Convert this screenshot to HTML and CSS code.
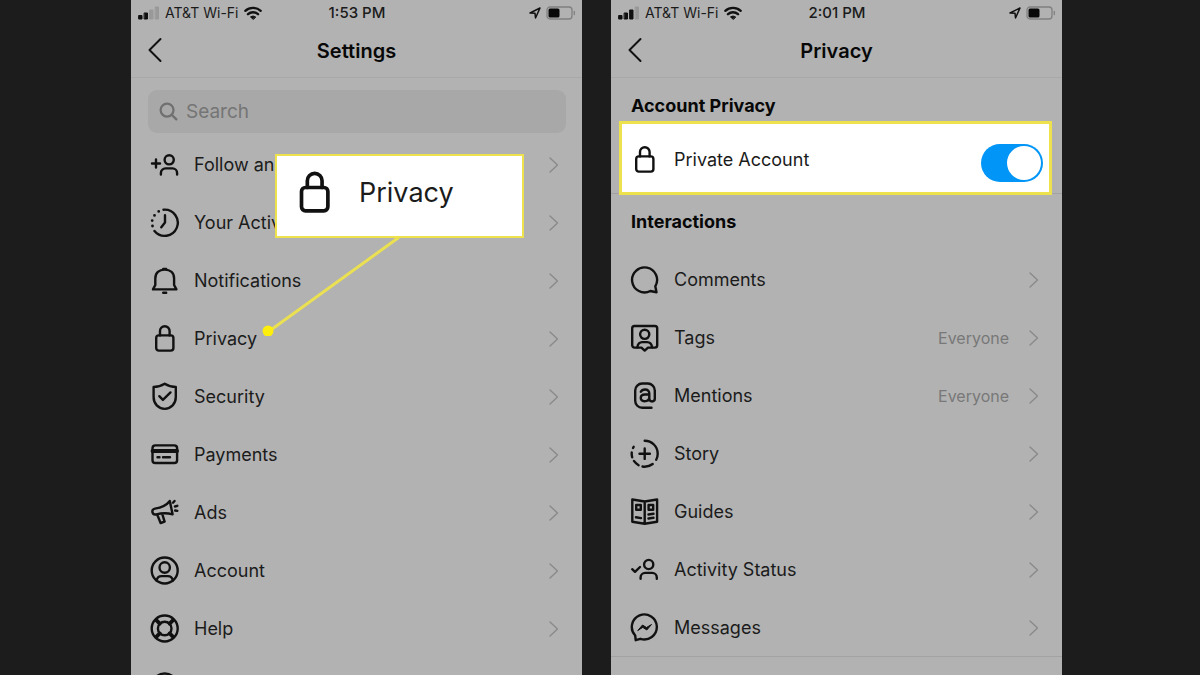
FILE: index.html
```
<!DOCTYPE html>
<html lang="en">
<head>
    <meta charset="UTF-8">
    <meta name="viewport" content="width=device-width, initial-scale=1.0">
    <title>Settings and Privacy</title>
    <link rel="stylesheet" href="styles.css">
</head>
<body>
    <!-- Shared icons -->
    <svg class="defs" aria-hidden="true">
        <symbol id="lock" viewBox="0 0 30 30">
            <rect x="6.2" y="11.4" width="17.2" height="15.2" rx="2.6"/>
            <path d="M10 11.4V7a4.8 4.8 0 0 1 9.6 0v4.4"/>
        </symbol>
        <symbol id="chevron" viewBox="0 0 10 16">
            <path d="M1 1l7.500 7L1 15"/>
        </symbol>
        <symbol id="back-arrow" viewBox="0 0 16 26">
            <path d="M13.500 2L2.500 13l11 11"/>
        </symbol>
        <symbol id="wifi" viewBox="0 0 18 14">
            <path d="M1.300 4.800a11.500 11.500 0 0 1 15.400 0M4 8.200a7.400 7.400 0 0 1 10 0"/>
            <path class="solid" d="M9 13.200L6.500 10.900a4 4 0 0 1 5 0z"/>
        </symbol>
        <symbol id="location" viewBox="0 0 12 12">
            <path d="M1 6L11 1 6.500 11 6 6.200z"/>
        </symbol>
        <symbol id="battery" viewBox="0 0 30 14">
            <rect class="case" x="1" y="1" width="25" height="12" rx="3"/>
            <path class="case" d="M28.300 5.500v3"/>
            <rect class="charge" x="2.500" y="2.500" width="11" height="9" rx="1.500"/>
        </symbol>
    </svg>

    <main class="screens">
        <section class="phone">
            <div class="status-bar">
                <div class="carrier">
                    <svg class="signal" viewBox="0 0 22 14"><path d="M1 9.500h3v3.500H1zM6.500 7h3v6h-3z"/><path class="off" d="M12 4h3v9h-3zM17.500 1h3v12h-3z"/></svg>
                    <span>AT&amp;T Wi-Fi</span>
                    <svg class="wifi"><use href="#wifi"/></svg>
                </div>
                <span class="time">1:53 PM</span>
                <div class="power">
                    <svg class="location"><use href="#location"/></svg>
                    <svg class="battery"><use href="#battery"/></svg>
                </div>
            </div>
            <header class="header">
                <button class="back" type="button" aria-label="Back"><svg><use href="#back-arrow"/></svg></button>
                <h1>Settings</h1>
            </header>

            <label class="search">
                <svg viewBox="0 0 20 20"><circle cx="8.500" cy="8.500" r="6.800"/><path d="M13.500 13.500l4.800 4.800"/></svg>
                <input type="text" placeholder="Search" aria-label="Search">
            </label>

            <nav class="list">
                <a class="row" href="#">
                    <svg class="icon" viewBox="0 0 30 30"><path d="M2 13.500h8M6 9.500v8"/><circle cx="19.200" cy="9.800" r="4.600"/><path d="M10.900 24.500V23a4.600 4.600 0 0 1 4.600-4.600h7a4.600 4.600 0 0 1 4.600 4.600v1.500"/></svg>
                    <span>Follow and Invite Friends</span>
                    <svg class="chevron"><use href="#chevron"/></svg>
                </a>
                <a class="row" href="#">
                    <svg class="icon" viewBox="0 0 30 30"><path d="M13.500 1.700A13.100 13.100 0 1 1 4.500 23M15 7.200v7.300l-3.700 4.700"/><path class="dots" d="M8.700 3.400h0M4.500 7.400h0M2.200 12.600h0M2.500 18h0"/></svg>
                    <span>Your Activity</span>
                    <svg class="chevron"><use href="#chevron"/></svg>
                </a>
                <a class="row" href="#">
                    <svg class="icon" viewBox="0 0 30 30"><path d="M3 23.400L5.300 19v-6.500c0-5.600 3.700-8.900 9.400-8.900s9.400 3.300 9.400 8.900V19l2.300 4.400zM13.200 2.900h3M13.200 26.800h3"/></svg>
                    <span>Notifications</span>
                    <svg class="chevron"><use href="#chevron"/></svg>
                </a>
                <a class="row" href="#">
                    <svg class="icon"><use href="#lock"/></svg>
                    <span>Privacy</span>
                    <svg class="chevron"><use href="#chevron"/></svg>
                </a>
                <a class="row" href="#">
                    <svg class="icon" viewBox="0 0 30 30"><path d="M14.700 1.700c3.300 2.100 6.800 3.200 11.100 3.200V15c0 6.800-4.700 11.600-11.100 11.900C8.300 26.600 3.600 21.800 3.600 15V4.900c4.300 0 7.800-1.100 11.100-3.200zM9.300 14.200l3.600 3.700 7.600-7.500"/></svg>
                    <span>Security</span>
                    <svg class="chevron"><use href="#chevron"/></svg>
                </a>
                <a class="row" href="#">
                    <svg class="icon" viewBox="0 0 30 30"><rect x="2.500" y="5.400" width="24.600" height="17.600" rx="2.800"/><path class="thick" d="M2.500 11h24.600"/><path d="M7.500 17.300h2M13 17.300h7"/></svg>
                    <span>Payments</span>
                    <svg class="chevron"><use href="#chevron"/></svg>
                </a>
                <a class="row" href="#">
                    <svg class="icon" viewBox="0 0 30 30"><path d="M19.800 3C16 8 11 9.700 5 10.600c-2.200.5-3 2-2.500 3.700s1.800 2.500 3.700 2c5.500-1.300 11-1.500 16.400 0zM7.300 16.800l3.300 8.200 4-1.300-2.300-7.500M23 4.700l1.500-1.700M25 8.500l2.300-.7M25.200 12.500l2.100.4"/></svg>
                    <span>Ads</span>
                    <svg class="chevron"><use href="#chevron"/></svg>
                </a>
                <a class="row" href="#">
                    <svg class="icon" viewBox="0 0 30 30"><circle cx="14.700" cy="14.500" r="13"/><circle cx="14.700" cy="11.500" r="5.200"/><path d="M6.500 24.500c.7-3 2.500-4.400 5-4.400h6.400c2.500 0 4.300 1.400 5 4.400"/></svg>
                    <span>Account</span>
                    <svg class="chevron"><use href="#chevron"/></svg>
                </a>
                <a class="row" href="#">
                    <svg class="icon" viewBox="0 0 30 30"><circle cx="14.700" cy="14.500" r="13"/><circle cx="14.700" cy="14.500" r="6.800"/><path class="thick" d="M6.500 6.300l3.300 3.300M22.900 6.300l-3.300 3.300M6.500 22.700l3.300-3.300M22.900 22.700l-3.300-3.300"/></svg>
                    <span>Help</span>
                    <svg class="chevron"><use href="#chevron"/></svg>
                </a>
                <a class="row" href="#" aria-label="About">
                    <svg class="icon" viewBox="0 0 30 30"><circle cx="14.700" cy="14.500" r="13"/><path d="M14.700 13v8M14.700 8.500v.2"/></svg>
                </a>
            </nav>

            <!-- Enlarged callout with a pointer to the Privacy row -->
            <svg class="pointer" viewBox="0 0 140 100"><path d="M136 2L6 96"/><circle cx="6" cy="95" r="5.500"/></svg>
            <div class="callout">
                <svg><use href="#lock"/></svg>
                <span>Privacy</span>
            </div>
        </section>

        <section class="phone">
            <div class="status-bar">
                <div class="carrier">
                    <svg class="signal" viewBox="0 0 22 14"><path d="M1 9.500h3v3.500H1zM6.500 7h3v6h-3zM12 4h3v9h-3z"/><path class="off" d="M17.500 1h3v12h-3z"/></svg>
                    <span>AT&amp;T Wi-Fi</span>
                    <svg class="wifi"><use href="#wifi"/></svg>
                </div>
                <span class="time">2:01 PM</span>
                <div class="power">
                    <svg class="location"><use href="#location"/></svg>
                    <svg class="battery"><use href="#battery"/></svg>
                </div>
            </div>
            <header class="header">
                <button class="back" type="button" aria-label="Back"><svg><use href="#back-arrow"/></svg></button>
                <h1>Privacy</h1>
            </header>

            <div class="group">
                <h2>Account Privacy</h2>
                <div class="highlight">
                    <svg class="icon"><use href="#lock"/></svg>
                    <label for="private-account">Private Account</label>
                    <input class="toggle" type="checkbox" id="private-account" checked>
                </div>
            </div>

            <div class="group">
                <h2>Interactions</h2>
                <nav class="list interactions">
                    <a class="row" href="#">
                        <svg class="icon" viewBox="0 0 30 30"><path d="M20.300 26A12.500 12.500 0 1 1 25.300 21.300L26.500 27.200z"/></svg>
                        <span>Comments</span>
                        <svg class="chevron"><use href="#chevron"/></svg>
                    </a>
                    <a class="row" href="#">
                        <svg class="icon" viewBox="0 0 30 30"><path d="M4.500 3h20.400a2.300 2.300 0 0 1 2.300 2.300v17a2.300 2.300 0 0 1-2.300 2.300H18l-3.300 3-3.300-3H4.500a2.300 2.300 0 0 1-2.300-2.300v-17A2.300 2.300 0 0 1 4.500 3z"/><circle cx="14.700" cy="11.300" r="4.600"/><path d="M7.300 24.300c.5-3.500 2.500-5.200 5-5.200h4.800c2.500 0 4.500 1.700 5 5.200"/></svg>
                        <span>Tags</span>
                        <em>Everyone</em>
                        <svg class="chevron"><use href="#chevron"/></svg>
                    </a>
                    <a class="row" href="#">
                        <svg class="icon" viewBox="0 0 30 30"><path d="M21.500 26.800h-9.300a7 7 0 0 1-7-7V9.500a7 7 0 0 1 7-7h5.600a7 7 0 0 1 7 7v8.300c0 3.500-5.500 3.500-5.500 0v-5.300c0-2.600-1.500-4-4.300-4-2 0-3.400.7-4.200 2.300M19.300 13.500h-4.500c-5.300 0-5.300 6.700-.5 6.700 3 0 5-1.500 5-4"/></svg>
                        <span>Mentions</span>
                        <em>Everyone</em>
                        <svg class="chevron"><use href="#chevron"/></svg>
                    </a>
                    <a class="row" href="#">
                        <svg class="icon" viewBox="0 0 30 30"><circle cx="14.700" cy="14.700" r="13" pathLength="360" stroke-dasharray="118 24 48 18 28 18 22 20 6 58" transform="rotate(-90 14.700 14.700)"/><path d="M9.500 14.700h10.400M14.700 9.500v10.400"/></svg>
                        <span>Story</span>
                        <svg class="chevron"><use href="#chevron"/></svg>
                    </a>
                    <a class="row" href="#">
                        <svg class="icon" viewBox="0 0 30 30"><path d="M2.300 2.500l12.400 2 12.400-2v22.300l-12.400 2-12.400-2zM14.700 4.500v22.300M6.200 8h4.600v4.800H6.200zM18.600 8h4.600v4.800h-4.600zM6 20.300l5 .8M18.500 17.500l5-.7M18.500 21.500l5-.7"/></svg>
                        <span>Guides</span>
                        <svg class="chevron"><use href="#chevron"/></svg>
                    </a>
                    <a class="row" href="#">
                        <svg class="icon" viewBox="0 0 30 30"><path d="M2.200 14.200l2.800 2.600 5-4.800"/><circle cx="18.700" cy="9.500" r="4.600"/><path d="M10.600 23.800v-1.300a4.600 4.600 0 0 1 4.600-4.600h7a4.600 4.600 0 0 1 4.600 4.600v1.300"/></svg>
                        <span>Activity Status</span>
                        <svg class="chevron"><use href="#chevron"/></svg>
                    </a>
                    <a class="row" href="#">
                        <svg class="icon" viewBox="0 0 30 30"><path d="M5.200 22.500A12.500 12.500 0 1 1 10.300 25.800L5.700 27.200z"/><path class="solid" d="M8 17.300l4.500-5.300 4 2.500 5-3-4.700 5.500-3.800-2.500z"/></svg>
                        <span>Messages</span>
                        <svg class="chevron"><use href="#chevron"/></svg>
                    </a>
                </nav>
            </div>
        </section>
    </main>
</body>
</html>
```
FILE: styles.css
```
* {
    box-sizing: border-box;
}
body {
    margin: 0;
    background-color: #1c1c1c;
    color: #1b1b1b;
    font-family: Inter, "Liberation Sans", sans-serif;
    font-size: 18px;
    line-height: 24px;
}
svg {
    flex: none;
    fill: none;
    stroke: #111;
    stroke-width: 2;
    stroke-linecap: round;
    stroke-linejoin: round;
}
h1,
h2 {
    margin: 0;
    color: #080808;
    font-weight: 600;
}
.defs {
    position: absolute;
    width: 0;
    height: 0;
}
.screens {
    display: flex;
    gap: 29px;
    height: 100vh;
    padding: 0 138px 0 131px;
    overflow: hidden;
}
.phone {
    position: relative;
    flex: 1;
    min-width: 0;
    background-color: #b2b2b2;
    overflow: hidden;
}

/* Status bar */
.status-bar {
    display: grid;
    grid-template-columns: 1fr auto 1fr;
    align-items: center;
    height: 25px;
    padding: 0 6px 0 7px;
    font-size: 14px;
}
.carrier,
.power {
    display: flex;
    align-items: center;
    gap: 5px;
}
.power {
    justify-content: flex-end;
}
.time {
    font-size: 15px;
    font-weight: 500;
}
.signal {
    width: 22px;
    height: 14px;
    fill: #111;
    stroke: #111;
    stroke-width: 1;
}
.signal .off {
    fill: #999;
    stroke: #999;
}
.wifi {
    width: 18px;
    height: 14px;
    stroke-width: 2.4;
}
.solid {
    fill: #111;
    stroke-width: 1;
}
.location {
    width: 12px;
    height: 12px;
    stroke-width: 1.5;
}
.battery {
    width: 30px;
    height: 14px;
}
.case {
    stroke: #808080;
    stroke-width: 1.3;
}
.charge {
    fill: #080808;
    stroke: none;
}

/* Title bar */
.header {
    display: grid;
    grid-template-columns: 1fr auto 1fr;
    align-items: center;
    height: 53px;
    padding: 0 16px;
    border-bottom: 1px solid #a8a8a8;
}
.header h1 {
    font-size: 20px;
}
.back {
    justify-self: start;
    display: flex;
    padding: 0 0 2px;
    border: 0;
    background: none;
    cursor: pointer;
}
.back svg {
    width: 16px;
    height: 26px;
}

/* Search */
.search {
    display: flex;
    align-items: center;
    gap: 8px;
    height: 43px;
    margin: 12px 16px 3px 17px;
    padding: 0 11px;
    border-radius: 9px;
    background-color: #a8a8a8;
}
.search svg {
    width: 19px;
    height: 19px;
    stroke: #707070;
    stroke-width: 2.4;
}
.search input {
    flex: 1;
    min-width: 0;
    padding: 0;
    border: 0;
    outline: none;
    background: none;
    font: inherit;
    font-size: 19px;
}
.search input::placeholder {
    color: #757575;
    opacity: 1;
}

/* Rows */
.row {
    display: flex;
    align-items: center;
    height: 58px;
    padding: 0 23px 0 19px;
    color: inherit;
    text-decoration: none;
}
.row span,
.highlight label {
    flex: 1;
    margin-left: 14px;
}
.row em {
    margin-right: 20px;
    color: #787878;
    font-size: 16px;
    font-style: normal;
}
.icon {
    width: 30px;
    height: 30px;
    stroke-width: 2.4;
}
.thick {
    stroke-width: 3.8;
}
.dots {
    stroke-width: 2.8;
}
.chevron {
    width: 10px;
    height: 16px;
    stroke: #8a8a8a;
    stroke-width: 1.4;
}

/* Groups on the privacy screen */
.group {
    border-bottom: 1px solid #a2a2a2;
}
.group h2 {
    padding: 16px 20px 3px;
    font-size: 18px;
    font-weight: 700;
}
.interactions {
    margin: 14px 0 -1px;
}
.highlight {
    position: relative;
    z-index: 1;
    display: flex;
    align-items: center;
    height: 74px;
    margin: 0 10px -2px 8px;
    padding: 3px 6px 0 8px;
    border: 3px solid #eee14e;
    background-color: #fff;
}
.toggle {
    appearance: none;
    display: flex;
    align-self: flex-end;
    width: 62px;
    height: 38px;
    margin: 0 0 10px;
    padding: 2px;
    border-radius: 19px;
    background-color: #0095f6;
    cursor: pointer;
}
.toggle::before {
    content: "";
    width: 34px;
    height: 34px;
    border-radius: 50%;
    background-color: #fff;
}
.toggle:checked {
    justify-content: flex-end;
}

/* Callout */
.callout {
    position: absolute;
    left: 144px;
    top: 154px;
    display: flex;
    align-items: center;
    gap: 21px;
    width: 249px;
    height: 84px;
    padding: 0 15px 6px;
    border: 2px solid #eee14e;
    background-color: #fff;
    font-size: 27px;
}
.callout svg {
    width: 46px;
    height: 46px;
    stroke-width: 2.4;
}
.pointer {
    position: absolute;
    left: 131px;
    top: 236px;
    width: 140px;
    height: 100px;
    stroke: #eae052;
    stroke-width: 3;
}
.pointer circle {
    fill: #fdee0b;
    stroke: none;
}
```
